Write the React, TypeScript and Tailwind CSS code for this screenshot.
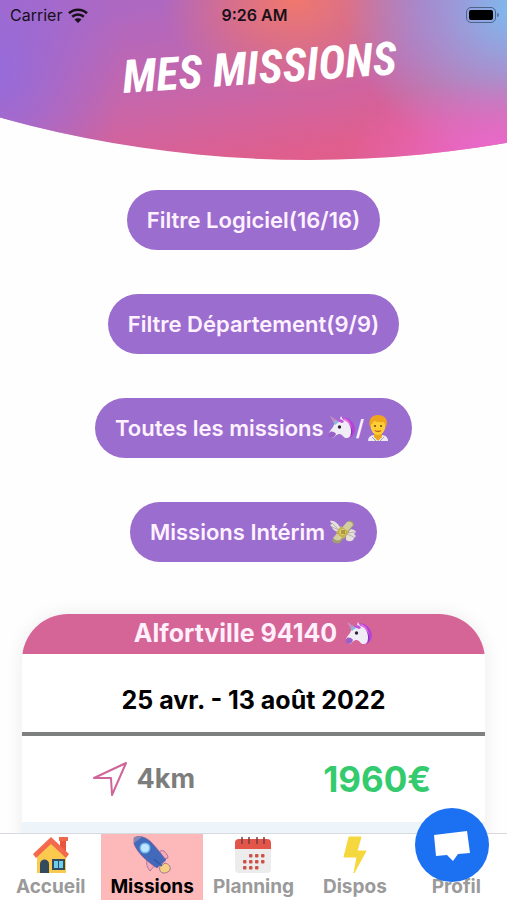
import React, { useState } from 'react';

const UnicornIcon: React.FC = () => (
  <svg viewBox="0 0 28 26" className="h-[26px] w-7 shrink-0" role="img" aria-label="Licorne">
    <path d="M11 4C17 0 26 5 27 14c0 4-2 7-5 9-2-1-3-4-2-7z" fill="#b541d6" />
    <path d="M15 3c5 0 8 5 9 11l-5-2z" fill="#e070dd" />
    <path d="M20 9q5 5 3 11" fill="none" stroke="#8136bd" strokeWidth="1.500" />
    <path d="M5 12c2-5 6-8 10-7 5 1 8 6 8 11 0 4-1 7-4 7-3 1-5-5-8-4-3 0-4 4-7 4-3-1-4-4-2-7z" fill="#f1edf6" />
    <path d="M2 17c2-1 5 0 6 2-1 3-3 4-5 4-3-1-3-4-1-6z" fill="#9960c5" />
    <path d="M2 1l9 6-4 3z" fill="#8bb9dd" />
    <path d="M2 1l6 4-2 2z" fill="#d981b8" />
    <path d="M11 6l2-5 3 5z" fill="#e9dff2" />
    <path d="M9 6c2-3 6-2 7 1l-2 1z" fill="#c451dd" />
    <circle cx="11.500" cy="12" r="1.700" fill="#2f2438" />
  </svg>
);

const HealthWorkerIcon: React.FC = () => (
  <svg viewBox="0 0 28 28" className="h-7 w-7 shrink-0" role="img" aria-label="Soignant">
    <path d="M4 27c0-5 4-6 7-6h6c4 0 7 2 7 6z" fill="#eee8f2" />
    <path d="M10 18h8v5l-4 4-4-4z" fill="#e8a51d" />
    <path d="M8 23l4 4M20 23l-4 4" stroke="#9f9fb5" strokeWidth="1" />
    <ellipse cx="14" cy="12" rx="7.500" ry="9" fill="#ffce35" />
    <path d="M6 13C4 5 8 1 14 1s11 4 8 12l-2-5c-5 1-8-1-10-1-1 2-3 3-4 6z" fill="#efa51e" />
    <circle cx="11" cy="12" r="1" fill="#61421b" />
    <circle cx="17" cy="12" r="1" fill="#61421b" />
    <path d="M11 16.500q3 2 6 0" fill="none" stroke="#bc5b20" strokeWidth="1.300" />
  </svg>
);

const MoneyIcon: React.FC = () => (
  <svg viewBox="0 0 28 26" className="h-[26px] w-7 shrink-0" role="img" aria-label="Argent">
    <path d="M12 10C9 4 5 1 1 2l2 3-2 1 2 2c1 4 5 5 9 5zM17 12c4-3 9-2 10 1l-2 2 2 2-2 2c-1 4-5 4-8 2z" fill="#e5dfda" />
    <path d="M3 4l7 7M3 8l7 3M18 14l8-1M18 15l7 3" stroke="#b4a7a9" strokeWidth="0.800" />
    <path d="M19 2c4-1 6 1 6 4L11 24c-4 1-7 0-8-3z" fill="#a29d73" />
    <path d="M18 3c3-1 5 0 6 3L11 21c-3 1-5 0-7-2z" fill="#d4ce9e" />
    <path d="M12 7l8 6-5 7-8-6z" fill="#c4b052" />
    <circle cx="13.500" cy="13" r="3" fill="#e3d15d" />
    <path d="M13 11v4M15 11v4" stroke="#6d6429" strokeWidth="1" />
  </svg>
);

const HouseIcon: React.FC = () => (
  <svg viewBox="0 0 38 38" className="size-[38px]" aria-hidden="true">
    <path d="M28 2h6v15h-6z" fill="#e8543e" />
    <path d="M27 1h9v4h-9z" fill="#ef674c" />
    <path d="M5 18L19 5l15 13v19H5z" fill="#fac94d" />
    <path d="M19 1L1 18l3 4L19 8l15 14 3-4z" fill="#f4694d" />
    <path d="M8 37v-9c0-6 9-6 9 0v9z" fill="#344b5e" />
    <path d="M20 23h13v11H20z" fill="#344b5e" />
    <path d="M22 25h4v7h-4zM27 25h4v7h-4z" fill="#6fcdec" />
  </svg>
);

const RocketIcon: React.FC = () => (
  <svg viewBox="0 0 38 38" className="size-[38px]" aria-hidden="true">
    <path d="M14 24c-1 4 0 7 3 11l6-7zM27 17c-1-2 1-3 4-2 3 3 4 5 4 7l-6 1z" fill="#f8aab5" stroke="#a66ea0" strokeWidth="0.900" />
    <path d="M1 2c5-3 12-1 17 4 6 6 11 13 15 18l-9 8C16 27 5 18 1 8z" fill="#416abb" stroke="#865a9a" strokeWidth="0.700" />
    <path d="M1 2c3-2 6-2 8-1L1 7z" fill="#8288b5" />
    <path d="M32 27c4 1 6 4 5 7-2 3-7 4-9 2s-2-6 1-8q2 1 3-1z" fill="#f5cf83" stroke="#9b7194" strokeWidth="0.900" />
    <circle cx="12" cy="12" r="5.500" fill="#75b8ef" />
    <circle cx="12" cy="12" r="4" fill="#bfe7ff" />
    <path d="M21 23l8 7" stroke="#3555a6" strokeWidth="1.500" />
  </svg>
);

const CalendarIcon: React.FC = () => (
  <svg viewBox="0 0 38 38" className="size-[38px]" aria-hidden="true">
    <path d="M1 10h36v23q0 4-4 4H5q-4 0-4-4z" fill="#ececed" />
    <path d="M1 13V7q0-4 4-4h28q4 0 4 4v6z" fill="#e35549" />
    <path d="M8 1v7M15 1v7M23 1v7M30 1v7" stroke="#713b40" strokeWidth="1.500" />
    {[18, 24, 30].map((y) =>
      [9, 15, 21, 27].map((x) =>
        (y === 18 && x === 9) || (y === 30 && x === 27) ? null : (
          <rect key={`${x}-${y}`} x={x} y={y} width="3.500" height="3.500" rx="1" fill="#ce5149" />
        )
      )
    )}
  </svg>
);

const BoltIcon: React.FC = () => (
  <svg viewBox="0 0 38 38" className="size-[38px]" aria-hidden="true">
    <path d="M13 1h12l-4 14h9L18 37l3-16H8z" fill="#f5d83e" strokeLinejoin="round" stroke="#f5d83e" />
  </svg>
);

const ProfileIcon: React.FC = () => (
  <svg viewBox="0 0 38 38" className="size-[38px]" aria-hidden="true">
    <circle cx="19" cy="11" r="8" fill="#f3c48f" />
    <path d="M6 36c0-18 26-18 26 0z" fill="#5478bd" />
  </svg>
);

const WifiIcon: React.FC = () => (
  <svg viewBox="0 0 20 15" className="h-[15px] w-5" aria-hidden="true" fill="none" stroke="#171019" strokeWidth="2.600">
    <path d="M1 5.200C6 .6 14 .6 19 5.200M4.200 8.700c3.300-3 8.300-3 11.600 0" />
    <path d="M10 15l-3.500-3.600c2-1.700 5-1.700 7 0z" fill="#171019" stroke="none" />
  </svg>
);

const filters = [
  { label: 'Filtre Logiciel(16/16)' },
  { label: 'Filtre Département(9/9)' },
  {
    label: 'Toutes les missions',
    icon: (
      <>
        <UnicornIcon />
        <span>/</span>
        <HealthWorkerIcon />
      </>
    ),
  },
  { label: 'Missions Intérim', icon: <MoneyIcon /> },
];

const tabs = [
  { name: 'Accueil', icon: <HouseIcon /> },
  { name: 'Missions', icon: <RocketIcon /> },
  { name: 'Planning', icon: <CalendarIcon /> },
  { name: 'Dispos', icon: <BoltIcon /> },
  { name: 'Profil', icon: <ProfileIcon /> },
];

const StatusBar: React.FC = () => (
  <div className="grid h-[30px] grid-cols-3 items-center pr-2 pl-[10px] text-base text-[#171019]">
    <div className="flex items-center gap-[6px]">
      <span>Carrier</span>
      <WifiIcon />
    </div>
    <span className="text-center font-semibold">9:26 AM</span>
    <div className="flex items-center justify-end gap-px" role="img" aria-label="Batterie pleine">
      <div className="h-4 w-[30px] rounded-[5px] border border-[#4d638a] p-[2px]">
        <div className="h-full rounded-[2px] bg-black" />
      </div>
      <div className="h-1 w-[2px] rounded-r bg-[#5872a0]" />
    </div>
  </div>
);

const MissionCard: React.FC = () => (
  <article className="mx-[22px] overflow-hidden rounded-t-[46px] bg-white shadow-[0_0_18px_rgba(0,0,0,0.08)]">
    <h2 className="flex h-10 items-center justify-center gap-2 bg-[#d56497] text-[25px] font-bold text-[#fff0fb]">
      Alfortville 94140 <UnicornIcon />
    </h2>
    <p className="flex h-[78px] items-center justify-center pt-4 text-[25px] font-bold text-black">
      25 avr. - 13 août 2022
    </p>
    <div className="h-1 bg-[#7d807f]" />
    <div className="grid h-[86px] grid-cols-2 items-center font-bold">
      <div className="flex items-center justify-center gap-2 pl-3 text-[27px] text-[#7d7d7d]">
        <svg viewBox="0 0 36 36" className="size-9" fill="none" stroke="#cf6598" strokeWidth="2" strokeLinejoin="round" aria-hidden="true">
          <path d="M2 17L34 2 20 34l-1-17z" />
        </svg>
        <span>4km</span>
      </div>
      <strong className="pl-4 text-center text-[35px] font-bold text-[#34cb6e]">1960€</strong>
    </div>
    <div className="h-20 bg-[#edf5fb]" />
  </article>
);

export default function App() {
  const [activeTab, setActiveTab] = useState('Missions');

  return (
    <div className="relative flex h-screen flex-col overflow-hidden bg-[#fefefe] font-['Inter',sans-serif]">
      <header className="h-40 shrink-0 bg-[radial-gradient(ellipse_30%_50%_at_98%_98%,#ec68d2_0%,#ec68d200_100%),radial-gradient(ellipse_34%_100%_at_102%_5%,#7cbcf0_0%,#93a6e4bb_40%,#b08acc00_100%),radial-gradient(ellipse_26%_60%_at_58%_0%,#f0786c_0%,#ec736f99_50%,#e86e7600_100%),radial-gradient(ellipse_24%_110%_at_0%_45%,#966bda_0%,#966bda00_100%),linear-gradient(168deg,#ad68c2_12%,#c666aa_48%,#e05e8c_82%)] [clip-path:ellipse(226%_1144px_at_61%_-984px)]">
        <StatusBar />
        <h1 className="mt-2 -rotate-4 pl-3 text-center font-['Roboto_Condensed','Liberation_Sans_Narrow',sans-serif] text-[46px] leading-[60px] font-bold text-white italic">
          MES MISSIONS
        </h1>
      </header>

      <main className="min-h-0 flex-1 overflow-y-auto pt-[30px] [scrollbar-width:none]">
        <div className="mb-[52px] flex flex-col items-center gap-11">
          {filters.map((filter) => (
            <button
              key={filter.label}
              type="button"
              className="flex h-[60px] items-center gap-1 rounded-full bg-[#9b6dcf] px-5 text-[22px] font-semibold whitespace-nowrap text-[#fff2ff]"
            >
              {filter.label}
              {filter.icon && <span className="flex items-center">{filter.icon}</span>}
            </button>
          ))}
        </div>
        <MissionCard />
      </main>

      <nav className="grid h-[67px] shrink-0 grid-cols-5 border-t border-[#d6dade] bg-white" aria-label="Navigation">
        {tabs.map((tab) => (
          <button
            key={tab.name}
            type="button"
            onClick={() => setActiveTab(tab.name)}
            className={`flex flex-col items-center pt-[2px] text-[19px] leading-[26px] font-bold ${
              activeTab === tab.name ? 'bg-[#fdb8b9] text-black' : 'text-[#9a9a9a]'
            }`}
          >
            {tab.icon}
            {tab.name}
          </button>
        ))}
      </nav>

      <button
        type="button"
        aria-label="Ouvrir la messagerie"
        className="absolute right-[18px] bottom-[18px] flex size-[74px] items-center justify-center rounded-full bg-[#1b71f1]"
      >
        <svg viewBox="0 0 38 32" className="h-8 w-[38px]" fill="white" aria-hidden="true">
          <path d="M1 6l33-4 3 22-12 1-5 7-6-6-11 1z" />
        </svg>
      </button>
    </div>
  );
}
